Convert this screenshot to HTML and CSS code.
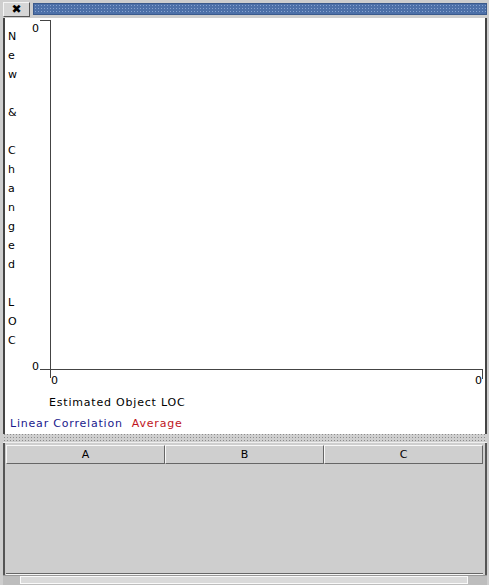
FILE: index.html
```html
<!DOCTYPE html>
<html>
<head>
<meta charset="utf-8">
<link rel="stylesheet" href="styles.css">
</head>
<body>
<div class="window">
  <div class="titlebar">
    <div class="close">✖</div>
    <div class="grip"></div>
  </div>
  <div class="panel">
    <div class="chart">
      <div class="ytitle">
        <span>N</span><span>e</span><span>w</span><span></span><span>&amp;</span><span></span><span>C</span><span>h</span><span>a</span><span>n</span><span>g</span><span>e</span><span>d</span><span></span><span>L</span><span>O</span><span>C</span>
      </div>
      <div class="plotwrap">
        <div class="plot"></div>
        <span class="tick ytop">0</span>
        <span class="tick ybot">0</span>
        <span class="tick xl">0</span>
        <span class="tick xr">0</span>
        <div class="hline topline"></div>
        <div class="hline botline"></div>
        <div class="vline lefttick"></div>
        <div class="vline righttick"></div>
      </div>
    </div>
    <div class="xtitle">Estimated Object LOC</div>
    <div class="legend"><span class="lin">Linear Correlation</span><span class="avg">Average</span></div>
  </div>
  <div class="splitter"></div>
  <div class="table">
    <div class="thead">
      <div class="th">A</div>
      <div class="th">B</div>
      <div class="th">C</div>
    </div>
    <div class="tbody"></div>
  </div>
  <div class="hscroll"><div class="thumb"></div></div>
</div>
</body>
</html>
```

FILE: styles.css
```css
html, body {
  margin: 0;
  padding: 0;
}
body {
  width: 489px;
  height: 585px;
  overflow: hidden;
  background: #cecece;
  font-family: "DejaVu Sans", sans-serif;
  font-size: 11px;
  color: #000;
}
.window {
  display: flex;
  flex-direction: column;
  height: 585px;
  box-sizing: border-box;
}
.titlebar {
  display: flex;
  height: 18px;
  box-sizing: border-box;
  padding: 2px 2px 1px 3px;
  gap: 3px;
}
.close {
  width: 27px;
  box-sizing: border-box;
  border: 1px solid;
  border-color: #f4f4f4 #555 #555 #f4f4f4;
  background: #d6d6d6;
  font-size: 12px;
  line-height: 13px;
  text-align: center;
  font-weight: bold;
}
.grip {
  flex: 1;
  margin-top: 1px;
  margin-bottom: 2px;
  border: 1px solid #3b5a8c;
  background-color: #4d70a8;
  background-image: radial-gradient(circle, #86a2cf 0.6px, transparent 0.9px);
  background-size: 3px 3px;
}
.panel {
  margin: 0 2px 0 3px;
  height: 416px;
  background: #fff;
  border-left: 2px solid #444;
  border-right: 2px solid #444;
  box-sizing: border-box;
  display: flex;
  flex-direction: column;
}
.chart {
  display: flex;
  height: 376px;
}
.ytitle {
  width: 26px;
  display: flex;
  flex-direction: column;
  padding: 9px 0 0 3px;
  box-sizing: border-box;
  font-size: 11px;
}
.ytitle span {
  height: 19px;
  line-height: 19px;
}
.plotwrap {
  position: relative;
  flex: 1;
}
.plot {
  position: absolute;
  left: 19px;
  top: 2px;
  width: 432px;
  height: 350px;
  border-left: 1px solid #444;
  border-bottom: 1px solid #444;
  box-sizing: border-box;
}
.tick {
  position: absolute;
  font-size: 11px;
  line-height: 12px;
}
.ytop { left: 1px; top: 5px; }
.ybot { left: 1px; top: 343px; }
.xl { left: 20px; top: 357px; }
.xr { left: 444px; top: 357px; }
.hline {
  position: absolute;
  height: 1px;
  background: #444;
}
.topline { left: 9px; top: 2px; width: 11px; }
.botline { left: 9px; top: 351px; width: 11px; }
.vline {
  position: absolute;
  width: 1px;
  background: #444;
}
.lefttick { left: 19px; top: 351px; height: 9px; }
.righttick { left: 451px; top: 351px; height: 10px; }
.xtitle {
  padding-left: 44px;
  letter-spacing: 0.8px;
  height: 20px;
  line-height: 16px;
  margin-top: 1px;
}
.legend {
  padding-left: 5px;
  letter-spacing: 0.8px;
  display: flex;
  gap: 9px;
  line-height: 12px;
  margin-top: 3px;
}
.lin { color: #1a1a8c; }
.avg { color: #c0141c; }
.splitter {
  height: 8px;
  margin: 0 2px 0 3px;
  background-color: #cfcfcf;
  background-image: radial-gradient(circle, #8c8c8c 0.6px, transparent 0.9px);
  background-size: 3px 3px;
  background-position: 0 2px;
  border-bottom: 1px solid #eee;
}
.table {
  flex: 1;
  margin: 0 2px 0 3px;
  border-left: 2px solid #555;
  border-right: 2px solid #555;
  padding: 2px 2px 0 1px;
  display: flex;
  flex-direction: column;
}
.thead {
  display: flex;
  height: 19px;
}
.th {
  flex: 1;
  box-sizing: border-box;
  border: 1px solid;
  border-color: #f8f8f8 #666 #666 #f8f8f8;
  background: #cfcfcf;
  text-align: center;
  line-height: 17px;
}
.tbody {
  flex: 1;
  border-bottom: 1px solid #f4f4f4;
  box-shadow: inset 0 -1px 0 #666;
}
.hscroll {
  height: 9px;
  background: #bdbdbd;
  margin: 0 2px 0 3px;
  padding: 0 19px 0 17px;
  border-top: 1px solid #999;
}
.thumb {
  height: 8px;
  background: #dadada;
  border: 1px solid #fafafa;
  box-sizing: border-box;
}
```
